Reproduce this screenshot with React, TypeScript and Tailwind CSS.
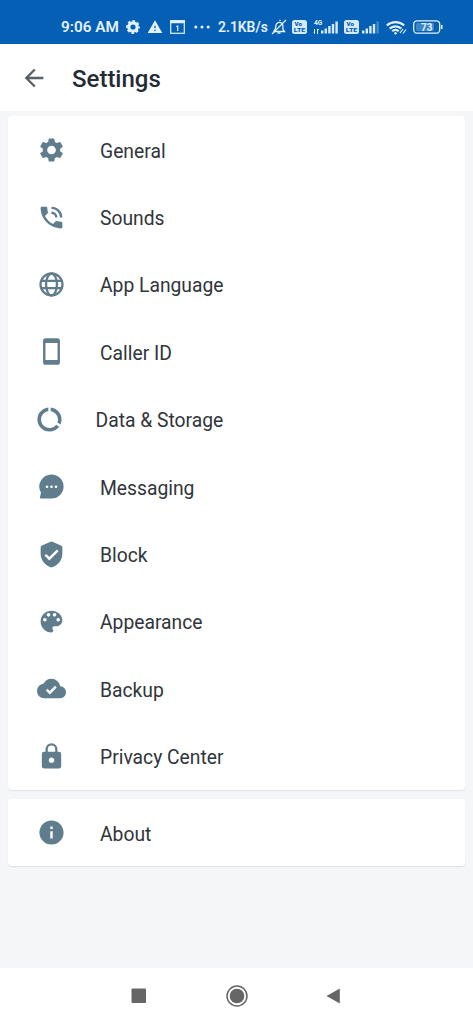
import type { ReactNode } from "react";
import { MdSettings, MdSmartphone, MdDataUsage, MdInfo, MdWarning, MdArrowBack } from "react-icons/md";

function Svg({ children }: { children: ReactNode }) {
  return (
    <svg viewBox="0 0 24 24" className="size-[29px]" fill="currentColor">
      {children}
    </svg>
  );
}

const check = { fill: "none", stroke: "#fff", strokeWidth: 2 };

const GlobeIcon = () => (
  <Svg>
    <g fill="none" stroke="currentColor" strokeWidth="1.900">
      <circle cx="12" cy="12" r="9.100" />
      <ellipse cx="12" cy="12" rx="4.500" ry="9" />
      <path d="M3.500 9h17M3.500 15h17" />
    </g>
  </Svg>
);

const PhoneIcon = () => (
  <Svg>
    <path d="M20 15.500c-1.250 0-2.450-.2-3.570-.570a1 1 0 0 0-1.020.240l-2.200 2.200a15.050 15.050 0 0 1-6.590-6.580l2.200-2.210c.280-.270.360-.660.250-1.010A11.360 11.360 0 0 1 8.500 4c0-.550-.450-1-1-1H4c-.550 0-1 .450-1 1 0 9.390 7.610 17 17 17 .550 0 1-.450 1-1v-3.500c0-.550-.450-1-1-1z" />
    <path d="M12 4a8 8 0 0 1 8 8M12 8a4 4 0 0 1 4 4" fill="none" stroke="currentColor" strokeWidth="2" />
  </Svg>
);

const PaletteIcon = () => (
  <Svg>
    <path d="M12 3a9 9 0 0 0 0 18c.830 0 1.500-.670 1.500-1.500 0-.390-.150-.740-.390-1.010-.230-.260-.380-.610-.380-.990 0-.830.670-1.500 1.500-1.500H16c2.760 0 5-2.240 5-5 0-4.420-4.030-8-9-8z" />
    <g fill="#fff">
      <circle cx="6.500" cy="10.500" r="1.500" />
      <circle cx="9.500" cy="6.500" r="1.500" />
      <circle cx="14.500" cy="6.500" r="1.500" />
      <circle cx="17.500" cy="10.500" r="1.500" />
    </g>
  </Svg>
);

const LockIcon = () => (
  <Svg>
    <rect x="4" y="8" width="16" height="14" rx="2" />
    <path d="M8 9V6a4 4 0 0 1 8 0v3" fill="none" stroke="currentColor" strokeWidth="1.900" />
    <circle cx="12" cy="15" r="2.200" fill="#fff" />
  </Svg>
);

const ChatIcon = () => (
  <Svg>
    <path d="M12 2a10 10 0 1 1 0 20H3.200c-.8 0-1-.7-.7-1.200L3.300 17A10 10 0 0 1 12 2z" />
    <circle cx="8.300" cy="12.200" r="1.100" fill="#fff" />
    <circle cx="12" cy="12.200" r="1.100" fill="#fff" />
    <circle cx="15.700" cy="12.200" r="1.100" fill="#fff" />
  </Svg>
);

const ShieldIcon = () => (
  <Svg>
    <path d="M11.200 1.400a2 2 0 0 1 1.600 0l7 3.100A2 2 0 0 1 21 6.300V11c0 5.500-3.300 9.800-8.200 11.500a2.400 2.400 0 0 1-1.600 0C6.300 20.800 3 16.500 3 11V6.300a2 2 0 0 1 1.200-1.800z" />
    <path d="m6.900 12.200 3.300 3.300 7-7" {...check} />
  </Svg>
);

const CloudIcon = () => (
  <Svg>
    <path d="M19.350 10.040A7.490 7.490 0 0 0 12 4C9.110 4 6.600 5.640 5.350 8.040A5.994 5.994 0 0 0 0 14c0 3.310 2.690 6 6 6h13c2.760 0 5-2.240 5-5 0-2.640-2.050-4.780-4.650-4.960z" />
    <path d="m8 13 2.600 2.500 5-5" {...check} />
  </Svg>
);

const rows: { label: string; icon: ReactNode; shifted?: boolean }[] = [
  { label: "General", icon: <MdSettings size={30} /> },
  { label: "Sounds", icon: <PhoneIcon /> },
  { label: "App Language", icon: <GlobeIcon /> },
  { label: "Caller ID", icon: <MdSmartphone size={29} /> },
  { label: "Data & Storage", icon: <MdDataUsage size={29} />, shifted: true },
  { label: "Messaging", icon: <ChatIcon /> },
  { label: "Block", icon: <ShieldIcon /> },
  { label: "Appearance", icon: <PaletteIcon /> },
  { label: "Backup", icon: <CloudIcon /> },
  { label: "Privacy Center", icon: <LockIcon /> },
];

function Row({ label, icon, shifted }: { label: string; icon: ReactNode; shifted?: boolean }) {
  return (
    <li className={shifted ? "flex h-[67.4px] items-center gap-[31px] pl-[26.5px]" : "flex h-[67.4px] items-center gap-[33px] pl-[29px]"}>
      <span className="flex size-[29px] shrink-0 items-center justify-center text-[#607d8e]">{icon}</span>
      <span className="pt-[3.8px] pl-[1px] text-[19.3px] leading-6 text-[#30353b]">{label}</span>
    </li>
  );
}

const VoLte = () => (
  <svg viewBox="0 0 15 14" className="h-[14px] w-[15px]">
    <rect width="15" height="14" rx="2.500" fill="#d5eafc" />
    <g fill="#0761b6" fontFamily="Roboto, sans-serif" fontWeight="900" fontSize="6.200">
      <text x="2.500" y="6.300">Vo</text>
      <text x="1.800" y="12.300" textLength="11.500" lengthAdjust="spacingAndGlyphs">LTE</text>
    </g>
  </svg>
);

function Signal({ faint }: { faint?: boolean }) {
  return (
    <svg viewBox="0 0 17 13" className="h-[13px] w-[17px]" fill="#d5eafc">
      <rect x="0" y="9.500" width="2.400" height="3" />
      <rect x="3.600" y="7.500" width="2.400" height="5" />
      <rect x="7.200" y="5" width="2.400" height="7.500" />
      <rect x="10.800" y="3" width="2.400" height="9.500" />
      <rect x="14.400" y="0.500" width="2.400" height="12" opacity={faint ? 0.3 : 1} />
    </svg>
  );
}

function StatusBar() {
  return (
    <div className="flex h-11 items-center bg-[#0560b5] pt-[10px] pl-[61px] text-[#e3f2ff]">
      <span className="w-[65px] text-[15.3px] leading-5 font-semibold whitespace-nowrap">9:06 AM</span>
      <svg viewBox="0 0 14 14" className="size-[14px]">
        <circle cx="7" cy="7" r="4.200" fill="none" stroke="currentColor" strokeWidth="3.200" />
        <circle cx="7" cy="7" r="5.900" fill="none" stroke="currentColor" strokeWidth="2" strokeDasharray="2.600 2.034" strokeDashoffset="1.300" />
      </svg>
      <MdWarning className="ml-[7px] h-[16px] w-[16px]" />
      <svg viewBox="0 0 15 14" className="ml-[6.5px] h-[14px] w-[15px]" fill="none" stroke="currentColor">
        <rect x="0.700" y="0.700" width="13.600" height="12.600" strokeWidth="1.200" />
        <path d="M0 2h15" strokeWidth="2.500" />
        <path d="M6.300 6.500 7.700 6v5" strokeWidth="1.200" />
      </svg>
      <svg viewBox="0 0 16 4" className="ml-[9.5px] h-[4px] w-[16px]" fill="currentColor">
        <circle cx="1.800" cy="2" r="1.500" />
        <circle cx="8" cy="2" r="1.500" />
        <circle cx="14.200" cy="2" r="1.500" />
      </svg>
      <span className="ml-[8px] w-[51px] text-[13.9px] leading-5 font-semibold whitespace-nowrap">2.1KB/s</span>
      <svg viewBox="0 0 16 16" className="ml-[2px] size-[16px]" fill="none" stroke="currentColor" strokeWidth="1.300">
        <path d="M3 12c2-1.500 1.500-4 2-6 .5-2.300 3.500-3.500 5.500-2 2.500 1.500 1 4.500 1.500 6.500l1.500 2H3z" />
        <path d="M6.500 14h3M1 15 15 1M9 2V.8" />
      </svg>
      <span className="ml-[5px]"><VoLte /></span>
      <svg viewBox="0 0 10 16" className="ml-[6px] h-[16px] w-[10px]" fill="currentColor">
        <text x="1" y="6" fontFamily="Roboto, sans-serif" fontWeight="700" fontSize="6.500">4G</text>
        <path d="M1 10h1v5H1zM0 13.500h2v1zM4 10h1v5H4zM4 10h2v1z" />
      </svg>
      <span className="-ml-[2px]"><Signal /></span>
      <span className="ml-[6px]"><VoLte /></span>
      <span className="ml-[3px]"><Signal faint /></span>
      <svg viewBox="0 0 21 15" className="ml-[7px] h-[15px] w-[21px]" fill="none" stroke="currentColor" strokeWidth="2.200">
        <path d="M.8 5.500a13 13 0 0 1 17.400 0M3.700 8.600a8.500 8.500 0 0 1 11.600 0M6.300 11.300a4.500 4.500 0 0 1 6.400 0" />
        <circle cx="9.500" cy="13.300" r="1.200" fill="currentColor" stroke="none" />
        <path d="m14 13 3-4m0 4.500 3-4" strokeWidth="1.200" />
      </svg>
      <svg viewBox="0 0 30 14" className="ml-[6px] h-[14px] w-[30px]">
        <rect x="0.700" y="0.800" width="26" height="12.400" rx="3.500" fill="none" stroke="currentColor" strokeWidth="1.300" />
        <rect x="3" y="3" width="18" height="8" rx="1" fill="currentColor" opacity="0.250" />
        <path d="M28 5h1.500v4H28z" fill="currentColor" />
        <text x="13.700" y="10.700" textAnchor="middle" fill="currentColor" fontFamily="Roboto, sans-serif" fontWeight="700" fontSize="10">73</text>
      </svg>
    </div>
  );
}

export default function App() {
  return (
    <div className="flex h-[1024px] w-[473px] flex-col overflow-hidden bg-[#f4f6f8] font-[Roboto,sans-serif]">
      <StatusBar />
      <header className="flex h-[67px] items-center bg-white pl-[20px]">
        <MdArrowBack size={28} className="text-[#5b6067]" />
        <h1 className="ml-[24px] pt-[2px] text-[24px] leading-8 font-medium text-[#252b34]">Settings</h1>
      </header>
      <main className="flex flex-1 flex-col gap-[9px] px-2 pt-[5px]">
        <ul className="rounded-[4px] bg-white shadow-[0_1px_1px_#dfe2e5]">
          {rows.map((row) => (
            <Row key={row.label} {...row} />
          ))}
        </ul>
        <ul className="rounded-[4px] bg-white shadow-[0_1px_1px_#dfe2e5]">
          <Row label="About" icon={<MdInfo size={29} />} />
        </ul>
      </main>
      <nav className="flex h-[56px] items-center justify-center bg-white text-[#666]">
        <svg viewBox="0 0 220 24" className="h-[24px] w-[220px]" fill="currentColor">
          <rect x="4.500" y="4.500" width="14.500" height="14.500" rx="1" />
          <circle cx="110" cy="12" r="7.300" />
          <circle cx="110" cy="12" r="10" fill="none" stroke="currentColor" strokeWidth="1.500" />
          <path d="M212.800 4.500v15L199.500 12z" strokeLinejoin="round" />
        </svg>
      </nav>
    </div>
  );
}
